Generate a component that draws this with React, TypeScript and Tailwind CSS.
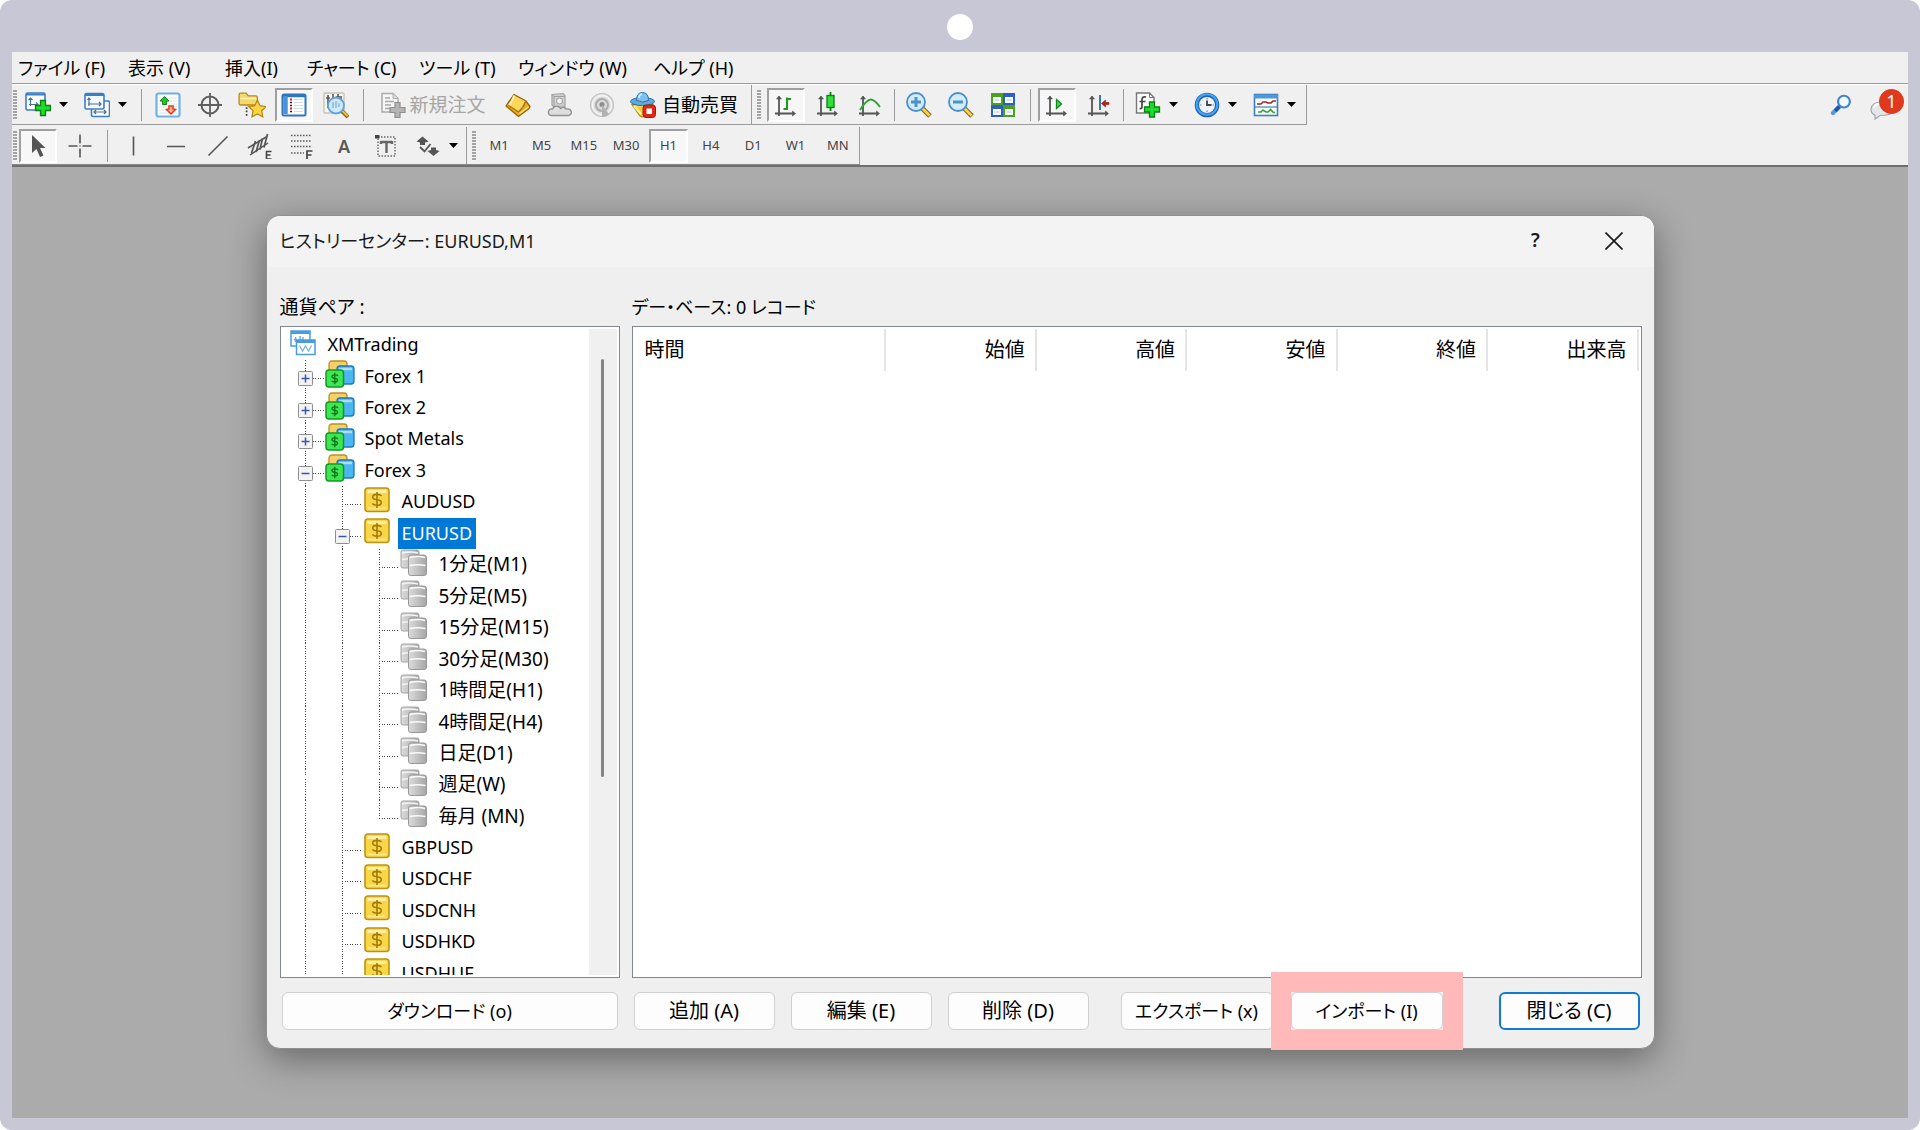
import type { ReactNode } from 'react';

// ---------- icons ----------

function Ico({ children, size = 'w-[26px] h-[26px]' }: { children: ReactNode; size?: string }) {
  return (
    <svg viewBox="0 0 26 26" className={`${size} shrink-0`} fill="none" aria-hidden="true">
      {children}
    </svg>
  );
}

const GreenPlus = ({ x, y }: { x: number; y: number }) => (
  <path
    transform={`translate(${x} ${y})`}
    d="M5.500 .5h5v5h5v5h-5v5h-5v-5h-5v-5h5z"
    fill="#1fdc2c"
    stroke="#0b7d12"
    strokeWidth="1.300"
  />
);

const Axes = () => (
  <g stroke="#555" strokeWidth="1.800">
    <path d="M6 4.500V24M2 21.500h19" />
    <path d="M3.500 7L6 4l2.500 3zM19.500 19l3 2.500-3 2.500z" fill="#555" strokeWidth=".6" />
  </g>
);

const NewChartIcon = () => (
  <Ico>
    <rect x="1" y="1" width="19" height="17" rx="1.500" fill="#fff" stroke="#3b7fc0" strokeWidth="1.600" />
    <path d="M1 2.500h19" stroke="#3b7fc0" strokeWidth="2.200" />
    <path d="M5.500 6v8M3.500 8l2-2 2 2M4 12.500h9M11 10.500l2 2-2 2" stroke="#4a6f94" strokeWidth="1.200" />
    <GreenPlus x={10} y={8} />
  </Ico>
);

const ProfilesIcon = () => (
  <Ico>
    <rect x="7.500" y="9" width="18" height="15.500" rx="1.500" fill="#fff" stroke="#3b7fc0" strokeWidth="1.600" />
    <path d="M10 20h12M12 18l-2 2 2 2M20 18l2 2-2 2" stroke="#4a6f94" strokeWidth="1.200" />
    <rect x="1" y="1.500" width="19" height="15.500" rx="1.500" fill="#f4f9fe" stroke="#3b7fc0" strokeWidth="1.600" />
    <path d="M1 3h19" stroke="#3b7fc0" strokeWidth="2" />
    <path d="M5 6v8M3.500 8L5 6l1.500 2M4 12h13M15 10l2 2-2 2" stroke="#4a6f94" strokeWidth="1.200" />
  </Ico>
);

const MarketWatchIcon = () => (
  <Ico>
    <rect x="1.500" y="1.500" width="23" height="23" rx="2" fill="#fff" stroke="#6db1ea" strokeWidth="2.200" />
    <path d="M4 6h18M4 9h18M4 12h18M4 15h18M4 18h18M4 21h18" stroke="#d7dde3" strokeWidth=".8" />
    <path d="M9.500 4.500L14 9h-2.500v3.500h-4V9H5z" fill="#27c42f" stroke="#15861b" />
    <path d="M16 22l-4.500-4.500L14 17v-3h4v3l2.500.5z" fill="#ffb09a" stroke="#dc3a1c" strokeWidth="1.500" />
  </Ico>
);

const DataWindowIcon = () => (
  <Ico>
    <circle cx="13" cy="13" r="8.500" stroke="#5f5f5f" strokeWidth="2" />
    <path d="M13 1v24M1 13h24" stroke="#5f5f5f" strokeWidth="1.800" />
  </Ico>
);

const NavigatorIcon = () => (
  <Ico size="w-[28px] h-[28px]">
    <path d="M1 3.500Q1 2 2.500 2h5l2 2.500h7Q18 4.500 18 6v7H2.500Q1 13 1 11.500z" fill="#f4d86c" stroke="#b38b1a" strokeWidth="1.200" />
    <path d="M2 7h15" stroke="#fff3b5" strokeWidth="1.500" />
    <path d="M8 15v9" stroke="#444" strokeWidth="1.600" strokeDasharray="1.600 1.600" />
    <path d="M18 8.500l2.500 5.200 5.500.8-4 3.900 1 5.600-5-2.700-5 2.700 1-5.600-4-3.900 5.500-.8z" fill="#fbd544" stroke="#b38b1a" strokeWidth="1.200" />
  </Ico>
);

const TerminalIcon = () => (
  <Ico>
    <rect x="1.500" y="2.500" width="23" height="21" rx="1.500" fill="#fff" stroke="#2f77bd" strokeWidth="2" />
    <path d="M2 4h22" stroke="#2f77bd" strokeWidth="2.500" />
    <path d="M4.500 4v18" stroke="#4b93d8" strokeWidth="4.500" />
    <path d="M9 7.500h2M9 16.500h2" stroke="#e02020" strokeWidth="1.800" />
    <path d="M9 10.500h2M9 13.500h2M9 19.500h2" stroke="#222" strokeWidth="1.400" />
    <path d="M13 7.500h9M13 10.500h9M13 13.500h9M13 16.500h9M13 19.500h9" stroke="#c9d3dd" strokeWidth=".8" />
  </Ico>
);

const TesterIcon = () => (
  <Ico>
    <rect x="1" y="1" width="20" height="20" rx="1" fill="#f7f7f5" stroke="#c9c2ae" strokeWidth="1.400" />
    <path d="M5 3v13M10 2v6M15 2v6M18 4v6M3 6h4M13 5h4" stroke="#555" strokeWidth="1.600" />
    <path d="M19 19l6 6" stroke="#8a6410" strokeWidth="4" />
    <path d="M19 18.500l5.500 5.500" stroke="#f0c23c" strokeWidth="2" />
    <circle cx="13" cy="13.500" r="8" fill="#c9e6fb" fillOpacity=".88" stroke="#5ea3dc" strokeWidth="1.800" />
    <path d="M10 10v6M13 9v7M16 11v4" stroke="#8fb6d8" strokeWidth="1.500" />
  </Ico>
);

const NewOrderIcon = () => (
  <Ico>
    <path d="M2 1.500h11l5 5V20H2z" fill="#f6f6f6" stroke="#ababab" strokeWidth="1.500" />
    <path d="M13 1.500v5h5" fill="#ddd" stroke="#ababab" />
    <path d="M5 6h5M5 9.500h9M5 13h6M5 16.500h5" stroke="#a8a8a8" strokeWidth="1.500" />
    <path d="M15 10.500h5v5h5v5h-5v5h-5v-5h-5v-5h5z" fill="#b4b4b4" stroke="#8e8e8e" strokeWidth="1.200" />
  </Ico>
);

const MetaEditorIcon = () => (
  <Ico>
    <path d="M1 14L9 2.500 21 9l4 5.500-1 2L13.500 24.500z" fill="#e9ac22" stroke="#95600c" strokeWidth="1.300" />
    <path d="M9 3.500Q7 10 4 13l10 6.500Q19 15 20.500 9.500z" fill="#fbd75c" />
    <path d="M9 3.500Q7 10 4 13" stroke="#fff3b8" strokeWidth="1.800" />
    <path d="M3.500 13.500l10 6.500Q18.500 15.500 20.500 9.500" stroke="#a8740f" strokeWidth="1.300" />
    <path d="M14.500 21.500l9-6.500" stroke="#fbe69a" strokeWidth="1.500" />
  </Ico>
);

const TerminalGreyIcon = () => (
  <Ico>
    <path d="M5 2.500L16 1.500 18 3.500V15H7L5 13z" fill="#cfcfcf" stroke="#a2a2a2" strokeWidth="1.200" />
    <path d="M5 2.500L7 4.500h11M7 4.500V15" stroke="#a2a2a2" />
    <circle cx="12.500" cy="9" r="3" fill="#f2f2f2" stroke="#9b9b9b" />
    <path d="M4 23.500q-3-1-2.500-4 1-3 4-2.500Q7.500 13 11 14.500q2 .5 2.500 2Q17 14 19 17q5-.5 5.500 3.500-.5 2.500-3 3z" fill="#dedede" stroke="#8f8f8f" strokeWidth="1.300" />
  </Ico>
);

const SignalIcon = () => (
  <Ico>
    <circle cx="13" cy="13" r="12" fill="#d9d9d9" />
    <circle cx="13" cy="13" r="9.500" stroke="#f4f4f4" strokeWidth="1.800" />
    <circle cx="13" cy="13" r="11.500" stroke="#c3c3c3" strokeWidth="1.200" />
    <circle cx="13" cy="13" r="6" stroke="#ababab" strokeWidth="1.800" />
    <circle cx="13" cy="12.500" r="2.500" fill="#8c8c8c" />
    <path d="M13 13v12q5-.5 7-3z" fill="#b2b2b2" />
  </Ico>
);

const AutoTradeIcon = () => (
  <Ico>
    <path d="M2 12.500h21L15 24.500q-3 1-5-.5z" fill="#f7cf3d" stroke="#b88a16" strokeWidth="1.200" />
    <path d="M4 14l7 8" stroke="#fff1a6" strokeWidth="2" />
    <ellipse cx="12.500" cy="9.500" rx="12" ry="4" fill="#5fa9dc" stroke="#2c75ad" />
    <path d="M6.500 8.500Q6.500 .5 12.500 .5t6 8q-6 3-12 0z" fill="#7dc1ec" stroke="#2c75ad" />
    <path d="M9 6q0-3.500 3-4" stroke="#d8effc" strokeWidth="1.500" />
    <rect x="13" y="13" width="12.500" height="12.500" rx="3" fill="#dc2a16" stroke="#a81507" />
    <rect x="16.500" y="16.500" width="5.500" height="5.500" fill="#fff" />
  </Ico>
);

const BarChartIcon = () => (
  <Ico>
    <Axes />
    <path d="M14 5.500V18M14 7h4M10.500 17H14" stroke="#1c9a24" strokeWidth="2" />
  </Ico>
);

const CandleIcon = () => (
  <Ico>
    <Axes />
    <path d="M15.500 0v19" stroke="#0b7d12" strokeWidth="1.800" />
    <rect x="12" y="3.500" width="7" height="12" fill="#2ee03a" stroke="#0b7d12" strokeWidth="1.300" />
  </Ico>
);

const LineChartIcon = () => (
  <Ico>
    <Axes />
    <path d="M3 18Q10 7 14 7.500T23 15" stroke="#2aa532" strokeWidth="1.800" />
  </Ico>
);

const ZoomIcon = ({ plus }: { plus?: boolean }) => (
  <Ico>
    <path d="M16 16l8 8" stroke="#8e6911" strokeWidth="5" />
    <path d="M16 16l7.500 7.500" stroke="#f5d458" strokeWidth="2.600" />
    <circle cx="10" cy="10" r="9" fill="#d3ecfc" stroke="#4b8fcb" strokeWidth="1.800" />
    <path d="M5 10h10" stroke="#4f93c4" strokeWidth="3" />
    {plus && <path d="M10 5v10" stroke="#4f93c4" strokeWidth="3" />}
  </Ico>
);

const TileIcon = () => (
  <Ico>
    <rect x="1" y="1" width="12" height="12" fill="#4aa31c" />
    <rect x="13" y="1" width="12" height="12" fill="#2b5fc7" />
    <rect x="1" y="13" width="12" height="12" fill="#2b5fc7" />
    <rect x="13" y="13" width="12" height="12" fill="#4aa31c" />
    <path d="M3 5h8v6H3zM15 5h8v6h-8zM3 17h8v6H3zM15 17h8v6h-8z" fill="#fff" />
    <path d="M4.500 8h5M4.500 20h5M16.500 8h5M16.500 20h5" stroke="#9cc3e8" strokeWidth="1.200" />
  </Ico>
);

const AutoScrollIcon = () => (
  <Ico>
    <Axes />
    <path d="M12.500 7.500l5 4.500-5 4.500z" fill="#3ee04a" stroke="#0f8a18" strokeWidth="1.300" />
  </Ico>
);

const ShiftIcon = () => (
  <Ico>
    <Axes />
    <path d="M14 3v15" stroke="#2d69a8" strokeWidth="1.800" />
    <path d="M15.500 11.500l4-3.500v2.500H23v2h-3.500V15z" fill="#b5230e" stroke="#8c1a09" strokeWidth=".6" />
  </Ico>
);

const IndicatorIcon = () => (
  <Ico>
    <path d="M1.500 1h13l4.500 4.500V21H1.500z" fill="#fcfcfc" stroke="#777" strokeWidth="1.400" />
    <path d="M14.500 1v4.500H19" stroke="#777" />
    <path d="M11 5q-4-1-4 3v7q0 2-2.500 1.500M4.500 9.500h6" stroke="#444" strokeWidth="1.700" />
    <GreenPlus x={9} y={9.5} />
  </Ico>
);

const ClockIcon = () => (
  <Ico>
    <circle cx="13" cy="13" r="12.300" fill="#1b62b8" />
    <circle cx="13" cy="12.500" r="10.300" stroke="#46a3f0" strokeWidth="2" />
    <circle cx="13" cy="13" r="8" fill="#eef4fa" />
    <path d="M13 8.500V13h4.500" stroke="#444" strokeWidth="1.800" />
    <path d="M13 6v1.500M13 18.500V20M6 13h1.500M18.500 13H20" stroke="#888" strokeWidth="1.200" />
  </Ico>
);

const TemplateIcon = () => (
  <Ico>
    <rect x="1.500" y="2.500" width="23" height="21" fill="#fff" stroke="#3b7fc0" strokeWidth="1.600" />
    <path d="M1 4.500h24" stroke="#4d97da" strokeWidth="4" />
    <path d="M2 15h22" stroke="#3b7fc0" strokeWidth="1.200" />
    <path d="M4 12h4l2-2h3l2 1h3l2-2h3" stroke="#9e2a1c" strokeWidth="1.600" />
    <path d="M5 20h3l2-2 3 2h2l2.500-2.500 3 3h1.500" stroke="#2aa532" strokeWidth="1.600" />
  </Ico>
);

const CursorIcon = () => (
  <Ico>
    <path d="M7 2v18l4.500-4 3.500 8 3.500-1.500-3.500-7.500h5.500z" fill="#555" />
  </Ico>
);

const CrossIcon = () => (
  <Ico>
    <path d="M13 1.500v9M13 15.500v9M1.500 13h9M15.500 13h9M13 12.500v1" stroke="#555" strokeWidth="1.600" />
  </Ico>
);

const VLineIcon = () => (
  <Ico>
    <path d="M12.500 3.500v19" stroke="#555" strokeWidth="1.600" />
  </Ico>
);

const HLineIcon = () => (
  <Ico>
    <path d="M4 13.500h18" stroke="#555" strokeWidth="1.600" />
  </Ico>
);

const TrendIcon = () => (
  <Ico>
    <path d="M3.500 22.500l19-19" stroke="#555" strokeWidth="1.600" />
  </Ico>
);

const ChannelIcon = () => (
  <Ico>
    <path d="M1 15L20 3.500M3 22L21 10" stroke="#555" strokeWidth="1.500" />
    <path d="M4.500 20l4-12M9 19l3.500-12M13 16.500l2.500-11M17 14.500L20.500 1" stroke="#555" strokeWidth="1.700" />
    <path d="M24.500 18.500h-5V26h5M19.500 22h4" stroke="#444" strokeWidth="1.600" />
  </Ico>
);

const FiboIcon = () => (
  <Ico>
    <path d="M2 2.500h21M2 8h21M2 13.500h21M2 20h13" stroke="#555" strokeWidth="1.500" strokeDasharray="1.500 1.500" />
    <path d="M18 26v-8h5.500M18 22h4.500" stroke="#444" strokeWidth="1.700" />
  </Ico>
);

const TextLabelIcon = () => (
  <Ico>
    <rect x="5" y="4" width="17" height="19" stroke="#666" strokeWidth="1.400" strokeDasharray="1.500 1.500" />
    <path d="M2 2h4.500v3.500H2z" fill="#444" />
    <path d="M8 9h11M13.500 9v11M8 8v3M19 8v3" stroke="#666" strokeWidth="2.400" />
  </Ico>
);

const ArrowsIcon = () => (
  <Ico>
    <path d="M7.500 3.500l6 5L10 9.500V12H5V9.500L1.500 8.500z" fill="#555" />
    <path d="M18.500 23l-6-5 3.500-1v-2.500h5V17l3.500 1z" fill="#555" />
    <path d="M5 14l4.500 4.500 6-7.500" stroke="#555" strokeWidth="1.800" />
  </Ico>
);

const SearchIcon = () => (
  <Ico size="w-[22px] h-[22px]">
    <path d="M3.500 22.500l7.500-7.500" stroke="#5b97dc" strokeWidth="5" strokeLinecap="round" />
    <path d="M6 20l5-5" stroke="#1f57a8" strokeWidth="4.500" />
    <circle cx="16.500" cy="9" r="7" fill="#f3f9fe" stroke="#3f84cf" strokeWidth="2.500" />
  </Ico>
);

const AccountIcon = () => (
  <Ico>
    <rect x="1" y="1" width="19" height="15" fill="#fff" stroke="#4a9be0" strokeWidth="1.500" />
    <path d="M1 2.500h19" stroke="#4a9be0" strokeWidth="3" />
    <path d="M4 9.500h3M5.500 7v5M10 6v5M13 7v4" stroke="#6fb0e8" strokeWidth="1.500" />
    <rect x="6.500" y="10" width="18.500" height="14.500" fill="#fff" stroke="#4a9be0" strokeWidth="1.500" />
    <path d="M6.500 11.500H25" stroke="#4a9be0" strokeWidth="3" />
    <path d="M9.500 15.500l3 5.500 3-5 3 5 3-5.500" stroke="#6fb0e8" strokeWidth="1.200" />
  </Ico>
);

const GroupIcon = () => (
  <svg viewBox="0 0 30 28" className="w-[30px] h-[28px] shrink-0" fill="none" aria-hidden="true">
    <rect x="4" y="1" width="18" height="17" rx="3" fill="#f3d069" stroke="#b8921c" strokeWidth="1.300" />
    <rect x="12" y="6" width="17" height="18" rx="3" fill="#4db5f2" stroke="#1b78bb" strokeWidth="1.300" />
    <path d="M14 9h13" stroke="#a8def9" strokeWidth="2.500" />
    <rect x="1" y="10" width="17.500" height="17" rx="3" fill="#3fe653" stroke="#109a20" strokeWidth="1.500" />
    <path d="M13 15.800q-1-1-3.200-1-2.800 0-2.800 1.700 0 1.500 2.800 1.800t2.800 1.800q0 1.900-2.800 1.900-2.200 0-3.200-1.100M9.800 12.800v11.400" stroke="#0d7519" strokeWidth="1.300" />
  </svg>
);

const SymbolIcon = () => (
  <Ico>
    <rect x="1" y="1" width="24" height="23.500" rx="3" fill="#f9d648" stroke="#bd940f" strokeWidth="1.600" />
    <path d="M3.500 4.500h19" stroke="#fdeea6" strokeWidth="3" />
    <path d="M3.500 21.500h19" stroke="#fbe38a" strokeWidth="2" />
    <path d="M17.500 9q-1.500-1.600-4.500-1.600-4.300 0-4.300 2.600 0 2.300 4.300 2.700t4.300 2.700q0 2.800-4.300 2.800-3.200 0-4.700-1.700M13 5v16" stroke="#a27c08" strokeWidth="1.600" />
  </Ico>
);

const DatabaseIcon = () => (
  <svg viewBox="0 0 28 28" className="w-[28px] h-[28px] shrink-0" fill="none" aria-hidden="true">
    <defs>
      <linearGradient id="cyl" x1="0" x2="1" y1="0" y2="0">
        <stop offset="0" stopColor="#dcdcdc" />
        <stop offset="1" stopColor="#a6a6a6" />
      </linearGradient>
    </defs>
    <rect x="1" y="1" width="18" height="18" rx="2" fill="url(#cyl)" stroke="#a4a4a4" />
    <path d="M2 4q8-2 16 0M2 10.500q8-1.500 16 0" stroke="#f4f4f4" strokeWidth="1.500" />
    <rect x="8.500" y="6" width="18" height="20.500" rx="2.500" fill="url(#cyl)" stroke="#989898" />
    <path d="M10 8.500q8-2 15 0M9.500 16.500q8-1.500 16 0" stroke="#fafafa" strokeWidth="1.500" />
  </svg>
);

// ---------- toolbar parts ----------

const Grip = () => (
  <span className="w-1 h-[30px] shrink-0 bg-[repeating-linear-gradient(to_bottom,#a3a3a3_0px,#a3a3a3_2px,#f5f5f5_2px,#f5f5f5_3px)]" />
);

const Sep = ({ narrow }: { narrow?: boolean }) => (
  <span className={`${narrow ? 'w-[7px]' : 'w-3'} shrink-0 flex justify-center`}>
    <span className="w-px h-8 bg-[#9b9b9b]" />
  </span>
);

function ToolButton({ label, pressed, children }: { label: string; pressed?: boolean; children: ReactNode }) {
  return (
    <button type="button" aria-label={label} aria-pressed={pressed} className="w-[42px] h-full shrink-0 flex items-center justify-center">
      <span
        className={
          pressed
            ? 'w-[38px] h-[34px] flex items-center justify-center bg-[#f7f7f7] border-2 border-t-[#9f9f9f] border-l-[#9f9f9f] border-r-white border-b-white'
            : 'flex items-center justify-center'
        }
      >
        {children}
      </span>
    </button>
  );
}

const DropArrow = ({ label }: { label: string }) => (
  <button type="button" aria-label={label} className="w-[17px] h-full shrink-0 flex items-center">
    <svg viewBox="0 0 9 5" className="w-[9px] h-[5px]" aria-hidden="true">
      <path d="M0 0h9L4.500 5z" fill="#000" />
    </svg>
  </button>
);

const menus = [
  { text: 'ファイル (F)', width: 'w-[110px]' },
  { text: '表示 (V)', width: 'w-[97px]' },
  { text: '挿入(I)', width: 'w-[82px]' },
  { text: 'チャート (C)', width: 'w-[112px]' },
  { text: 'ツール (T)', width: 'w-[99px]' },
  { text: 'ウィンドウ (W)', width: 'w-[135px]' },
  { text: 'ヘルプ (H)', width: 'w-[110px]' },
];

const periods = ['M1', 'M5', 'M15', 'M30', 'H1', 'H4', 'D1', 'W1', 'MN'];

function MainToolbar() {
  return (
    <div className="flex h-10 border-b border-[#9b9b9b]">
      <div className="flex items-center pl-px pr-1.5 border-r border-[#9b9b9b]">
        <Grip />
        <ToolButton label="新規チャート"><NewChartIcon /></ToolButton>
        <DropArrow label="新規チャートの一覧" />
        <ToolButton label="チャートの組表示"><ProfilesIcon /></ToolButton>
        <DropArrow label="組表示の一覧" />
        <Sep />
        <ToolButton label="気配値表示"><MarketWatchIcon /></ToolButton>
        <ToolButton label="データウィンドウ"><DataWindowIcon /></ToolButton>
        <ToolButton label="ナビゲーター"><NavigatorIcon /></ToolButton>
        <ToolButton label="ターミナル" pressed><TerminalIcon /></ToolButton>
        <ToolButton label="ストラテジーテスター"><TesterIcon /></ToolButton>
        <Sep />
        <button type="button" className="w-[128px] h-full shrink-0 flex items-center justify-center gap-[3px] text-[19px] leading-6 text-[#a6a6a6] whitespace-nowrap">
          <NewOrderIcon />
          新規注文
        </button>
        <ToolButton label="メタエディター"><MetaEditorIcon /></ToolButton>
        <ToolButton label="仮想ホスティング"><TerminalGreyIcon /></ToolButton>
        <ToolButton label="シグナル"><SignalIcon /></ToolButton>
        <button type="button" className="w-[122px] h-full shrink-0 flex items-center gap-1.5 pl-[7px] text-[19px] leading-6 text-black whitespace-nowrap">
          <AutoTradeIcon />
          自動売買
        </button>
      </div>

      <div className="flex items-center gap-1 pl-[5px] pr-0.5 border-r border-[#9b9b9b]">
        <Grip />
        <div className="flex h-full items-center">
          <ToolButton label="バーチャート" pressed><BarChartIcon /></ToolButton>
          <ToolButton label="ローソク足"><CandleIcon /></ToolButton>
          <ToolButton label="ラインチャート"><LineChartIcon /></ToolButton>
          <Sep narrow />
          <ToolButton label="拡大"><ZoomIcon plus /></ToolButton>
          <ToolButton label="縮小"><ZoomIcon /></ToolButton>
          <ToolButton label="整列"><TileIcon /></ToolButton>
          <Sep />
          <ToolButton label="自動スクロール" pressed><AutoScrollIcon /></ToolButton>
          <ToolButton label="チャートシフト"><ShiftIcon /></ToolButton>
          <Sep narrow />
          <ToolButton label="インディケータ"><IndicatorIcon /></ToolButton>
          <DropArrow label="インディケータの一覧" />
          <ToolButton label="時間足設定"><ClockIcon /></ToolButton>
          <DropArrow label="時間足の一覧" />
          <ToolButton label="定型チャート"><TemplateIcon /></ToolButton>
          <DropArrow label="定型チャートの一覧" />
        </div>
      </div>
    </div>
  );
}

function LineToolbar() {
  return (
    <div className="flex h-10 pt-0.5 border-b border-[#8a8a8a]">
      <div className="flex items-center pl-px border-r border-[#9b9b9b]">
        <Grip />
        <ToolButton label="カーソル" pressed><CursorIcon /></ToolButton>
        <ToolButton label="十字カーソル"><CrossIcon /></ToolButton>
        <Sep />
        <ToolButton label="垂直線"><VLineIcon /></ToolButton>
        <ToolButton label="水平線"><HLineIcon /></ToolButton>
        <ToolButton label="トレンドライン"><TrendIcon /></ToolButton>
        <ToolButton label="チャネル"><ChannelIcon /></ToolButton>
        <ToolButton label="フィボナッチ"><FiboIcon /></ToolButton>
        <ToolButton label="テキスト">
          <span className="text-[18px] leading-6 font-semibold text-[#5a5a5a]">A</span>
        </ToolButton>
        <ToolButton label="テキストラベル"><TextLabelIcon /></ToolButton>
        <ToolButton label="矢印"><ArrowsIcon /></ToolButton>
        <DropArrow label="矢印の一覧" />
      </div>

      <div className="flex items-center gap-0.5 pl-[5px] border-r border-[#9b9b9b]">
        <Grip />
        <div className="grid grid-cols-9 w-[381px] h-full items-center">
          {periods.map((p) => (
            <button
              key={p}
              type="button"
              className={
                p === 'H1'
                  ? 'mx-0.5 h-[34px] text-[13px] text-[#444] bg-[#f7f7f7] border-2 border-t-[#9f9f9f] border-l-[#9f9f9f] border-r-white border-b-white'
                  : 'mx-0.5 h-[34px] text-[13px] text-[#444]'
              }
            >
              {p}
            </button>
          ))}
        </div>
      </div>
    </div>
  );
}

// ---------- tree ----------

type Guide = 'line' | 'branch' | 'last' | 'plus' | 'minus';

interface TreeRow {
  label: string;
  guides: Guide[];
  icon: 'account' | 'group' | 'symbol' | 'data';
  selected?: boolean;
}

const tree: TreeRow[] = [
  { label: 'XMTrading', guides: [], icon: 'account' },
  { label: 'Forex 1', guides: ['plus'], icon: 'group' },
  { label: 'Forex 2', guides: ['plus'], icon: 'group' },
  { label: 'Spot Metals', guides: ['plus'], icon: 'group' },
  { label: 'Forex 3', guides: ['minus'], icon: 'group' },
  { label: 'AUDUSD', guides: ['line', 'branch'], icon: 'symbol' },
  { label: 'EURUSD', guides: ['line', 'minus'], icon: 'symbol', selected: true },
  { label: '1分足(M1)', guides: ['line', 'line', 'branch'], icon: 'data' },
  { label: '5分足(M5)', guides: ['line', 'line', 'branch'], icon: 'data' },
  { label: '15分足(M15)', guides: ['line', 'line', 'branch'], icon: 'data' },
  { label: '30分足(M30)', guides: ['line', 'line', 'branch'], icon: 'data' },
  { label: '1時間足(H1)', guides: ['line', 'line', 'branch'], icon: 'data' },
  { label: '4時間足(H4)', guides: ['line', 'line', 'branch'], icon: 'data' },
  { label: '日足(D1)', guides: ['line', 'line', 'branch'], icon: 'data' },
  { label: '週足(W)', guides: ['line', 'line', 'branch'], icon: 'data' },
  { label: '毎月 (MN)', guides: ['line', 'line', 'last'], icon: 'data' },
  { label: 'GBPUSD', guides: ['line', 'branch'], icon: 'symbol' },
  { label: 'USDCHF', guides: ['line', 'branch'], icon: 'symbol' },
  { label: 'USDCNH', guides: ['line', 'branch'], icon: 'symbol' },
  { label: 'USDHKD', guides: ['line', 'branch'], icon: 'symbol' },
  { label: 'USDHUF', guides: ['line', 'branch'], icon: 'symbol' },
];

function GuideCell({ kind }: { kind: Guide }) {
  const box = kind === 'plus' || kind === 'minus';
  return (
    <svg className="w-[37px] h-full shrink-0" fill="none" aria-hidden="true">
      <g stroke="#444" strokeDasharray="1 1.500" shapeRendering="crispEdges">
        <line x1="18.500" y1="0" x2="18.500" y2={kind === 'last' ? '18' : '100%'} />
        {kind !== 'line' && <line x1="18" y1="18.500" x2="37" y2="18.500" />}
      </g>
      {box && (
        <g>
          <rect x="11.500" y="11.500" width="14" height="14" rx="1" fill="#f3f3f3" stroke="#8e8e8e" />
          <path d="M14.500 18.500h8" stroke="#3c56a6" strokeWidth="1.500" />
          {kind === 'plus' && <path d="M18.500 14.500v8" stroke="#3c56a6" strokeWidth="1.500" />}
        </g>
      )}
    </svg>
  );
}

const rowIcons = {
  account: <AccountIcon />,
  group: <GroupIcon />,
  symbol: <SymbolIcon />,
  data: <DatabaseIcon />,
};

function SymbolTree() {
  return (
    <ul role="tree" aria-label="通貨ペア" className="flex-1 pl-1 h-[660px] grid grid-rows-[repeat(21,1fr)]">
      {tree.map((row) => (
        <li key={row.label} role="treeitem" aria-selected={!!row.selected} className="flex h-full min-h-0">
          {row.guides.map((g, i) => (
            <GuideCell key={i} kind={g} />
          ))}
          <span className="w-[37px] shrink-0 flex justify-center items-center pb-1 pr-1">{rowIcons[row.icon]}</span>
          <span
            className={`flex items-center px-1 whitespace-nowrap ${row.icon === 'data' ? 'text-[19px]' : 'text-[18px]'} ${
              row.selected ? 'bg-[#0078d7] text-white' : 'text-black'
            }`}
          >
            {row.label}
          </span>
        </li>
      ))}
    </ul>
  );
}

// ---------- dialog ----------

const columns = ['時間', '始値', '高値', '安値', '終値', '出来高'];

const buttonBase = 'h-[38px] rounded-md bg-[#fdfdfd] leading-6 text-black whitespace-nowrap';

function HistoryCenter() {
  return (
    <section
      role="dialog"
      aria-labelledby="dialog-title"
      className="w-full max-w-[1389px] mx-auto rounded-[14px] border border-[#8f8f8f] bg-[#efefef] shadow-[0_10px_36px_rgba(0,0,0,0.4)]"
    >
      <header className="flex items-center h-[51px] pb-0.5 pl-[13px] pr-4 rounded-t-[13px] bg-[#f3f3f3]">
        <h1 id="dialog-title" className="text-[18px] leading-6 text-[#1a1a1a]">ヒストリーセンター: EURUSD,M1</h1>
        <button type="button" aria-label="ヘルプ" className="ml-auto w-12 h-9 text-[19px] font-semibold text-[#1a1a1a]">?</button>
        <button type="button" aria-label="閉じる" className="ml-[30px] w-12 h-9 flex items-center justify-center">
          <svg viewBox="0 0 18 18" className="w-[18px] h-[18px]" aria-hidden="true">
            <path d="M.5 .5l17 17M17.500 .5l-17 17" stroke="#1a1a1a" strokeWidth="1.700" />
          </svg>
        </button>
      </header>

      <div className="grid grid-cols-[340px_minmax(0,1fr)] gap-x-3 pl-[13px] pr-3 pb-[18px]">
        <p className="h-[59px] flex items-end pb-1.5 text-[19px] leading-[26px] text-black">通貨ペア :</p>
        <p className="h-[59px] flex items-end pb-1.5 text-[18px] leading-[26px] text-black">デー・ベース: 0 レコード</p>

        <div className="h-[652px] p-0.5 bg-white border border-[#828790]">
          <div className="flex h-full overflow-hidden">
            <SymbolTree />
            <div className="w-7 h-full shrink-0 bg-[#f0f0f0] flex justify-center pt-[30px]">
              <span className="w-[3px] h-[418px] rounded-sm bg-[#858585]" />
            </div>
          </div>
        </div>

        <div className="h-[652px] p-0.5 bg-white border border-[#828790]">
          <table className="w-full table-fixed border-collapse">
            <colgroup>
              <col className="w-[25%]" />
            </colgroup>
            <thead>
              <tr>
                {columns.map((c, i) => (
                  <th
                    key={c}
                    scope="col"
                    className={`h-[42px] px-2.5 border-r-2 border-[#e5e5e5] text-[20px] leading-6 font-normal text-black ${
                      i === 0 ? 'text-left' : 'text-right'
                    }`}
                  >
                    {c}
                  </th>
                ))}
              </tr>
            </thead>
            <tbody />
          </table>
        </div>

        <div className="flex pt-3.5 px-0.5">
          <button type="button" className={`${buttonBase} flex-1 border border-[#d0d0d0] text-[18px]`}>ダウンロード (o)</button>
        </div>
        <div className="flex pt-3.5 px-0.5">
          <div className="flex gap-4">
            <button type="button" className={`${buttonBase} w-[141px] border border-[#d0d0d0] text-[20px]`}>追加 (A)</button>
            <button type="button" className={`${buttonBase} w-[141px] border border-[#d0d0d0] text-[20px]`}>編集 (E)</button>
            <button type="button" className={`${buttonBase} w-[141px] border border-[#d0d0d0] text-[20px]`}>削除 (D)</button>
          </div>
          <div className="flex gap-[18px] ml-auto mr-14">
            <button type="button" className={`${buttonBase} w-[152px] border border-[#d0d0d0] text-[18px]`}>エクスポート (x)</button>
            <div className="relative flex">
              <span className="absolute -inset-5 border-[20px] border-[#ffb9b9] pointer-events-none" />
              <button type="button" className={`${buttonBase} w-[152px] border border-[#d0d0d0] text-[18px]`}>インポート (I)</button>
            </div>
          </div>
          <button type="button" className={`${buttonBase} w-[141px] border-2 border-[#0f7bd6] text-[20px]`}>閉じる (C)</button>
        </div>
      </div>
    </section>
  );
}

export default function App() {
  return (
    <div className="bg-white">
      <div className="min-h-screen flex flex-col px-3 pb-3 rounded-[12px] bg-[#c8c7d5] font-['Noto_Sans','Noto_Sans_CJK_JP',sans-serif] [font-feature-settings:'palt'] overflow-hidden">
        <div className="h-[52px] flex items-center justify-center pt-0.5">
          <span className="w-[26px] h-[26px] rounded-full bg-white" />
        </div>

        <div className="bg-[#f0f0f0]">
          <nav className="flex h-8 items-center pl-1.5 border-b border-[#9b9b9b]">
            {menus.map((m) => (
              <button key={m.text} type="button" className={`${m.width} h-full text-left text-[18px] leading-6 text-black whitespace-nowrap`}>
                {m.text}
              </button>
            ))}
          </nav>

          <div className="flex border-t border-white">
            <div className="flex flex-col items-start">
              <MainToolbar />
              <LineToolbar />
            </div>
            <div className="ml-auto flex h-10 items-center gap-4 pr-1">
              <button type="button" aria-label="検索" className="w-[22px] h-[22px]"><SearchIcon /></button>
              <button type="button" aria-label="通知 1件" className="relative w-9 h-8">
                <svg viewBox="0 0 36 32" className="w-9 h-8" fill="none" aria-hidden="true">
                  <path d="M13 13q-9 0-10 7 0 5 4 6l0 4 5-3.500q11 0 14-4z" fill="#e4e7ea" stroke="#a2a6aa" strokeWidth="1.200" />
                  <path d="M6 19q1-4 6-4.500" stroke="#fff" strokeWidth="2" />
                </svg>
                <span className="absolute right-0 top-0 w-[25px] h-[25px] rounded-full bg-[#e0391d] text-white text-[18px] leading-[25px] text-center">1</span>
              </button>
            </div>
          </div>
        </div>

        <main className="flex-1 px-5 pt-[48px] pb-4 bg-[#ababab] border-t-2 border-[#6f6f6f]">
          <HistoryCenter />
        </main>
      </div>
    </div>
  );
}
